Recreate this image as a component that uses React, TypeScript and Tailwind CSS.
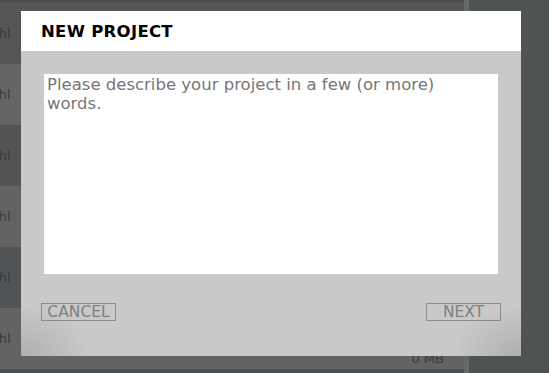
import React from "react";

const rows = [
  "bg-[#555555]",
  "bg-[#656565]",
  "bg-[#545454]",
  "bg-[#636363]",
  "bg-[#505456]",
  "bg-[#626362]",
];

const NewProjectModal: React.FC = () => {
  return (
    <div className="absolute left-[21px] top-[11px] w-[500px] h-[345px] flex flex-col overflow-hidden bg-[#c9c9c9]">
      <div className="h-[40px] shrink-0 bg-white flex items-center pl-[20px] pt-[2px]">
        <h2 className="text-[16.5px] font-bold text-black tracking-[0.3px] font-['DejaVu_Sans',sans-serif]">
          NEW PROJECT
        </h2>
      </div>
      <div className="relative flex-1 flex flex-col px-[23px] pt-[23px]">
        <textarea
          placeholder={"Please describe your project in a few (or more)\nwords."}
          className="relative z-10 w-[454px] h-[200px] bg-white resize-none outline-none px-[3px] pt-[1px] text-[16.5px] leading-[19px] text-[#666] placeholder:text-[#767676] font-['DejaVu_Sans',sans-serif]"
        />
        <div className="relative z-10 flex justify-between mt-[29px] -mx-[3px]">
          <button className="w-[75px] h-[18px] border border-[#8a8a8a] text-[#7f7f7f] text-[15.5px] leading-[16px] font-['DejaVu_Sans',sans-serif]">
            CANCEL
          </button>
          <button className="w-[75px] h-[18px] border border-[#8a8a8a] text-[#7f7f7f] text-[15.5px] leading-[16px] font-['DejaVu_Sans',sans-serif]">
            NEXT
          </button>
        </div>
        <div className="pointer-events-none absolute inset-0 bg-[radial-gradient(70px_50px_at_0%_100%,rgba(0,0,0,0.13),transparent),radial-gradient(70px_50px_at_100%_100%,rgba(0,0,0,0.13),transparent)]" />
      </div>
    </div>
  );
};

export default function App() {
  return (
    <div className="relative w-[549px] h-[373px] overflow-hidden bg-[#4c4f50] font-['DejaVu_Sans',sans-serif]">
      <div className="flex h-full">
        <div className="w-[464px] flex flex-col bg-[#4d5052]">
          <div className="h-[3px] bg-[#4e4e4e]" />
          {rows.map((bg, i) => (
            <div key={i} className={`h-[61px] shrink-0 flex items-center justify-between pr-[20px] ${bg}`}>
              <span className="-ml-[18px] text-[13px] text-[#3a3a3a]">Zahl</span>
              {i === 5 && (
                <span className="self-end mb-[1px] text-[13px] text-[#3a3a3a]">0 MB</span>
              )}
            </div>
          ))}
        </div>
        <div className="w-[5px] bg-[#666868]" />
        <div className="flex-1 bg-[#505354]" />
      </div>
      <NewProjectModal />
    </div>
  );
}
